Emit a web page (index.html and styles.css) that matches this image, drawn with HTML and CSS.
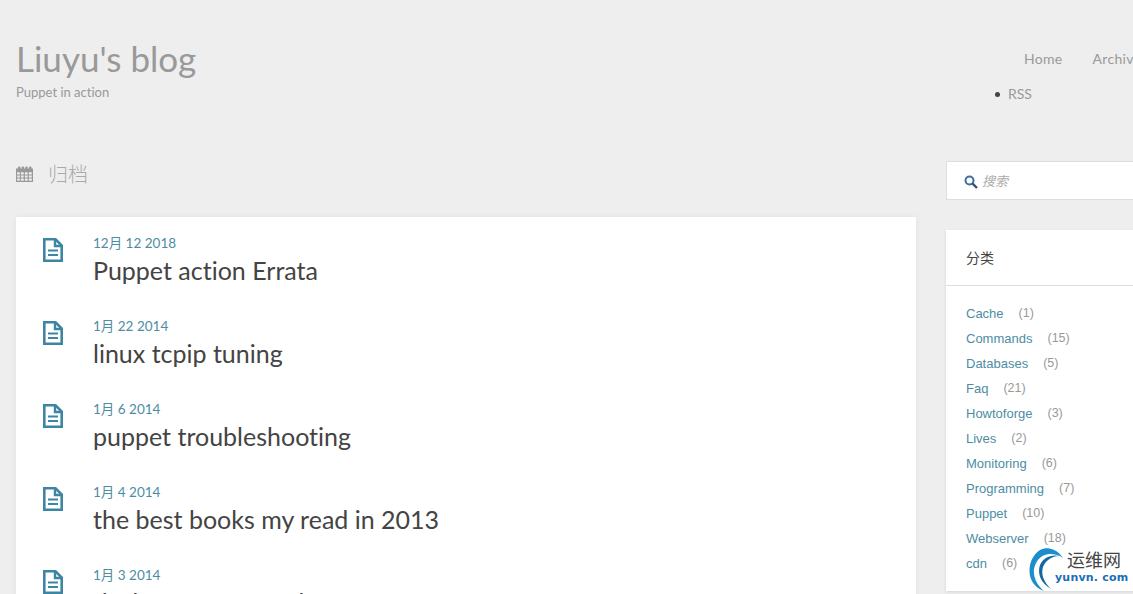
FILE: index.html
```html
<!DOCTYPE html>
<html lang="zh">
<head>
<meta charset="utf-8">
<title>Liuyu's blog</title>
<link rel="stylesheet" href="styles.css">
</head>
<body>
<svg class="defs" width="0" height="0"><defs>
<symbol id="doc" viewBox="0 0 20 24"><path d="M1.300 1.300H12.500L18.700 7.500V22.700H1.300Z" fill="none" stroke="currentColor" stroke-width="2.600" stroke-linejoin="miter"/><path d="M12 2V8H18" fill="none" stroke="currentColor" stroke-width="2.400"/><path d="M5 12.500H15M5 17H15" fill="none" stroke="currentColor" stroke-width="2.200"/></symbol>
</defs></svg>
<div class="page">
  <header class="top">
    <div class="brand">
      <h1 class="site-title">Liuyu's blog</h1>
      <p class="tagline">Puppet in action</p>
    </div>
    <nav class="nav">
      <div class="nav-main"><a>Home</a><a>Archives</a></div>
      <ul class="nav-sub"><li>RSS</li></ul>
    </nav>
  </header>
  <div class="columns">
    <main class="main">
      <h2 class="section-title">
        <svg class="cal" viewBox="0 0 17 16"><path fill="currentColor" fill-rule="evenodd" d="M0 2.500H2V1.300C2 .3 4.500 .3 4.500 1.300V2.500H5.700V1.300C5.700 .3 8.200 .3 8.200 1.300V2.500H9.300V1.300C9.300 .3 11.800 .3 11.800 1.300V2.500H13V1.300C13 .3 15.500 .3 15.500 1.300V2.500H17V16H0ZM1.200 6.200V8.400H3.800V6.200ZM4.900 6.200V8.400H7.700V6.200ZM8.900 6.200V8.400H11.600V6.200ZM12.800 6.200V8.400H15.800V6.200ZM1.200 9.500V11.500H3.800V9.500ZM4.900 9.500V11.500H7.700V9.500ZM8.900 9.500V11.500H11.600V9.500ZM12.800 9.500V11.500H15.800V9.500ZM1.200 12.600V14.800H3.800V12.600ZM4.900 12.600V14.800H7.700V12.600ZM8.900 12.600V14.800H11.600V12.600ZM12.800 12.600V14.800H15.800V12.600Z"/></svg>
        <span>归档</span>
      </h2>
      <section class="card">
        <article class="post"><svg class="doc"><use href="#doc"/></svg><div><div class="date">12月 12 2018</div><div class="post-title">Puppet action Errata</div></div></article>
        <article class="post"><svg class="doc"><use href="#doc"/></svg><div><div class="date">1月 22 2014</div><div class="post-title">linux tcpip tuning</div></div></article>
        <article class="post"><svg class="doc"><use href="#doc"/></svg><div><div class="date">1月 6 2014</div><div class="post-title">puppet troubleshooting</div></div></article>
        <article class="post"><svg class="doc"><use href="#doc"/></svg><div><div class="date">1月 4 2014</div><div class="post-title">the best books my read in 2013</div></div></article>
        <article class="post"><svg class="doc"><use href="#doc"/></svg><div><div class="date">1月 3 2014</div><div class="post-title">flush your memcache</div></div></article>
      </section>
    </main>
    <aside class="side">
      <div class="search">
        <svg class="mag" viewBox="0 0 14 14"><circle cx="5.500" cy="5.500" r="4" fill="none" stroke="#3d6f9e" stroke-width="2"/><path d="M8.500 8.500L13 13" stroke="#34506e" stroke-width="2.400"/></svg>
        <span>搜索</span>
      </div>
      <div class="widget">
        <h3 class="widget-title">分类</h3>
        <ul class="cats">
          <li><a>Cache</a><span>(1)</span></li>
          <li><a>Commands</a><span>(15)</span></li>
          <li><a>Databases</a><span>(5)</span></li>
          <li><a>Faq</a><span>(21)</span></li>
          <li><a>Howtoforge</a><span>(3)</span></li>
          <li><a>Lives</a><span>(2)</span></li>
          <li><a>Monitoring</a><span>(6)</span></li>
          <li><a>Programming</a><span>(7)</span></li>
          <li><a>Puppet</a><span>(10)</span></li>
          <li><a>Webserver</a><span>(18)</span></li>
          <li><a>cdn</a><span>(6)</span></li>
        </ul>
      </div>
    </aside>
  </div>
</div>
<div class="mark">
  <svg class="swirl" viewBox="0 0 40 45"><path fill="#1b8ecb" d="M35 11C29 2 20-1 12 3 4 8 0 19 2 29 4 37 10 42 16 44 9 38 5 30 6 22 8 12 15 7 22 7 27 7 31 8 35 11Z"/><path fill="#16699f" d="M31 9C23 7 15 11 12 18 9 27 13 36 23 42 15 34 13 27 15 20 18 13 24 9 31 9Z"/></svg>
  <div class="mark-text"><div class="mark-cn">运维网</div><div class="mark-en">yunvn. com</div></div>
</div>
</body>
</html>
```
FILE: styles.css
```css
* { box-sizing: border-box; }
html, body { margin: 0; height: 594px; overflow: hidden; }
body { background: #eee; font-family: Lato, "Noto Sans CJK SC", sans-serif; font-variant-ligatures: none; color: #999; position: relative; }
.defs { position: absolute; }
.page { width: 1200px; padding: 0 16px; }
.top { display: flex; height: 161px; }
.brand { width: 979px; padding-top: 36px; }
.site-title { margin: 0; font-size: 35px; line-height: 44px; font-weight: 400; color: #999; }
.tagline { margin: 2px 0 0; font-size: 13px; line-height: 20px; color: #999; }
.nav { padding-top: 50px; }
.nav-main { display: flex; gap: 30px; padding-left: 29px; font-size: 14px; line-height: 18px; letter-spacing: .3px; white-space: nowrap; }
.nav-sub { margin: 17px 0 0; padding: 0; list-style: none; font-size: 14px; line-height: 18px; }
.nav-sub li { display: flex; align-items: center; gap: 8px; }
.nav-sub li::before { content: ""; width: 5px; height: 5px; border-radius: 50%; background: #444; }
.columns { display: flex; gap: 30px; }
.main { width: 900px; flex: none; }
.section-title { margin: 0; height: 56px; display: flex; align-items: flex-start; gap: 15px; font-size: 20px; line-height: 26px; font-weight: 300; color: #aaa; }
.cal { width: 17px; height: 16px; margin-top: 5px; color: #999; }
.card { background: #fff; height: 400px; padding: 17px 0 0 27px; box-shadow: 0 0 6px rgba(0,0,0,.06); }
.post { display: flex; gap: 30px; height: 83px; }
.doc { width: 20px; height: 24px; margin-top: 4px; color: #3d86a3; }
.date { font-size: 13.500px; line-height: 18px; color: #4d8da3; }
.post-title { font-size: 25px; line-height: 36px; color: #444; white-space: nowrap; }
.side { width: 254px; flex: none; }
.search { height: 39px; background: #fff; border: 1px solid #ddd; display: flex; align-items: center; gap: 4px; padding-left: 17px; font-size: 13px; font-style: italic; color: #aaa; }
.mag { width: 14px; height: 14px; margin-top: 3px; }
.widget { margin-top: 30px; background: #fff; height: 361px; box-shadow: 0 1px 3px rgba(0,0,0,.1); }
.widget-title { margin: 0; height: 56px; padding: 18px 20px 0; border-bottom: 1px solid #ddd; font-size: 14px; line-height: 20px; font-weight: 400; color: #444; }
.cats { list-style: none; margin: 0; padding: 15px 20px 0; font-family: "Liberation Sans", sans-serif; font-size: 13px; line-height: 25px; }
.cats li { display: flex; height: 25px; }
.cats a { color: #4d8da3; margin-right: 15px; }
.cats span { color: #999; font-size: 12.500px; }
.mark { position: absolute; left: 1028px; top: 547px; width: 105px; height: 45px; }
.swirl { display: block; width: 40px; height: 45px; }
.mark-text { position: absolute; left: 27px; top: 1px; white-space: nowrap; }
.mark-cn { margin-left: 12px; font-size: 18px; line-height: 23px; color: #444; font-family: "Noto Sans CJK SC", sans-serif; }
.mark-en { font-family: "DejaVu Sans", sans-serif; font-weight: 700; font-size: 11px; line-height: 13px; letter-spacing: .2px; color: #1a6fb5; }
```
